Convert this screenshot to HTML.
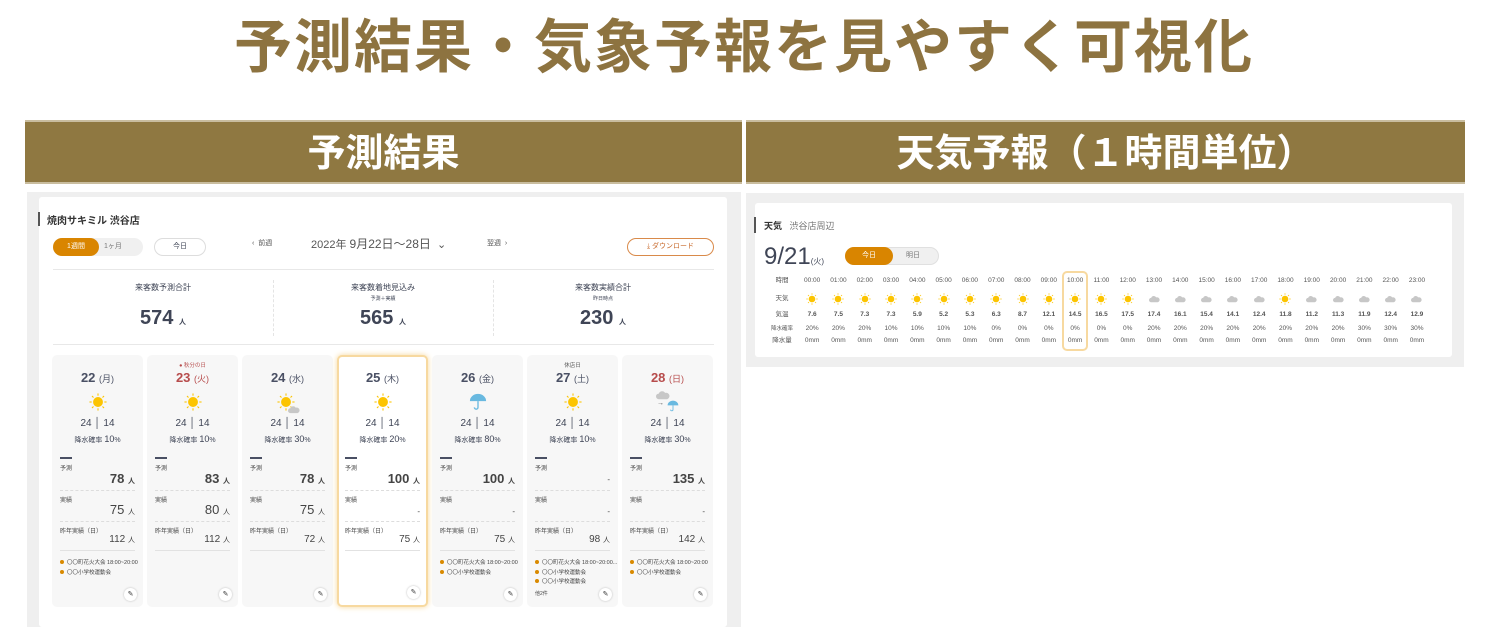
<!DOCTYPE html>
<html><head><meta charset="utf-8"><style>
*{margin:0;padding:0;box-sizing:border-box}
body{width:1488px;height:627px;background:#fff;position:relative;overflow:hidden;font-family:"Liberation Sans","Noto Sans CJK JP",sans-serif;color:#3f4556}
.a{position:absolute}
.title{left:0;top:10px;width:1488px;text-align:center;font-size:58px;font-weight:bold;color:#8d7340;letter-spacing:2px;line-height:76px}
.hd{top:120px;height:64px;background:#8f7841;color:#fff;font-size:38px;font-weight:bold;text-align:center;line-height:64px;border-top:2px solid #c9bd9f;border-bottom:2px solid #c9bd9f}
.card{top:355px;width:91px;height:252px;background:#f7f7f7;border-radius:5px}
.card.hl{background:#fff;border:2px solid #f7d9a0;box-shadow:0 0 6px #f6d79a}
.c{position:absolute;left:0;width:100%;text-align:center}
.sm{font-size:6px;color:#555}
.dt{font-size:13px;font-weight:bold;top:15px;color:#4a5064}
.dt span{font-size:9px;font-weight:normal}
.red{color:#b74c4c}
.tp{top:63px;font-size:10px}
.rp{top:79px;font-size:7px}
.rp b{font-size:9px;font-weight:normal}
.lb{position:absolute;left:8px;font-size:6px;color:#444}
.v{position:absolute;right:8px;text-align:right;color:#444}
.v small{font-size:7px}
.ln{position:absolute;left:8px;right:8px;border-top:1px dashed #ddd}
.ev{position:absolute;left:8px;font-size:5.5px;color:#444;white-space:nowrap}
.ev i{display:inline-block;width:4px;height:4px;border-radius:50%;background:#d98a00;margin-right:3px}
.pen{position:absolute;right:6px;bottom:6px;width:13px;height:13px;border-radius:50%;background:#fff;box-shadow:0 0 2px #bbb;font-size:7px;text-align:center;line-height:13px;color:#333}
.sun{position:absolute;left:50%;top:38px;margin-left:-9px;width:18px;height:18px}
.wt td{font-size:6.5px;text-align:center;width:26.3px;color:#555;padding:0;line-height:8px;vertical-align:middle}
.wt svg{display:block;margin:0 auto}
</style></head><body>
<div class="a title">予測結果・気象予報を見やすく可視化</div>
<div class="a hd" style="left:25px;width:717px">予測結果</div>
<div class="a hd" style="left:746px;width:719px">天気予報（１時間単位）</div>

<div class="a" style="left:27px;top:192px;width:714px;height:435px;background:#efefef"></div>
<div class="a" style="left:39px;top:197px;width:688px;height:430px;background:#fff;border-radius:3px"></div>
<div class="a" style="left:38px;top:212px;width:2px;height:14px;background:#555"></div>
<div class="a" style="left:47px;top:212px;font-size:10px;font-weight:bold;color:#333">焼肉サキミル 渋谷店</div>
<div class="a" style="left:53px;top:238px;width:90px;height:18px;border-radius:9px;background:#f0f0f0"></div>
<div class="a" style="left:53px;top:238px;width:46px;height:18px;border-radius:9px;background:#d98500;color:#fff;font-size:7px;text-align:center;line-height:18px">1週間</div>
<div class="a" style="left:104px;top:238px;font-size:7px;line-height:18px;color:#777">1ヶ月</div>
<div class="a" style="left:154px;top:238px;width:52px;height:18px;border-radius:9px;border:1px solid #ddd;font-size:7px;text-align:center;line-height:16px">今日</div>
<div class="a" style="left:252px;top:238px;font-size:7px;line-height:12px;color:#555">‹&nbsp; 前週</div>
<div class="a" style="left:311px;top:235px;font-size:11px;color:#555">2022年 <span style="font-size:12px">9月22日〜28日</span> &nbsp;⌄</div>
<div class="a" style="left:487px;top:238px;font-size:7px;line-height:12px;color:#555">翌週 &nbsp;›</div>
<div class="a" style="left:627px;top:238px;width:87px;height:18px;border-radius:9px;border:1px solid #d98a4a;font-size:7px;text-align:center;line-height:16px;color:#c7682a">⤓ ダウンロード</div>
<div class="a" style="left:53px;top:269px;width:661px;border-top:1px solid #e8e8e8"></div>
<div class="a" style="left:53px;top:344px;width:661px;border-top:1px solid #e8e8e8"></div>
<div class="a" style="left:273px;top:280px;height:56px;border-left:1px dashed #e4e4e4"></div>
<div class="a" style="left:493px;top:280px;height:56px;border-left:1px dashed #e4e4e4"></div>
<div class="a" style="left:53px;top:282px;width:220px;text-align:center;font-size:8px">来客数予測合計</div>
<div class="a" style="left:273px;top:282px;width:220px;text-align:center;font-size:8px">来客数着地見込み<br><span style="font-size:5px">予測＋実績</span></div>
<div class="a" style="left:493px;top:282px;width:220px;text-align:center;font-size:8px">来客数実績合計<br><span style="font-size:5px">昨日時点</span></div>
<div class="a" style="left:53px;top:307px;width:220px;text-align:center;font-size:20px;font-weight:bold">574 <span style="font-size:7px">人</span></div>
<div class="a" style="left:273px;top:307px;width:220px;text-align:center;font-size:20px;font-weight:bold">565 <span style="font-size:7px">人</span></div>
<div class="a" style="left:493px;top:307px;width:220px;text-align:center;font-size:20px;font-weight:bold">230 <span style="font-size:7px">人</span></div>

<svg width="0" height="0" style="position:absolute"><defs>
<symbol id="sun" viewBox="0 0 20 20"><circle cx="10" cy="10" r="5.5" fill="#fcc400"/><g stroke="#fcc400" stroke-width="1.2"><line x1="10" y1="0.5" x2="10" y2="3"/><line x1="10" y1="17" x2="10" y2="19.5"/><line x1="0.5" y1="10" x2="3" y2="10"/><line x1="17" y1="10" x2="19.5" y2="10"/><line x1="3.3" y1="3.3" x2="5" y2="5"/><line x1="15" y1="15" x2="16.7" y2="16.7"/><line x1="3.3" y1="16.7" x2="5" y2="15"/><line x1="15" y1="5" x2="16.7" y2="3.3"/></g></symbol>
<symbol id="cl" viewBox="0 0 20 14"><path d="M4 13a4 4 0 0 1 0-8 5 5 0 0 1 9-1 4.5 4.5 0 0 1 3 9z" fill="#c7c7c7"/></symbol>
<symbol id="um" viewBox="0 0 20 20"><path d="M1 9a9 8 0 0 1 18 0z" fill="#69b9e0"/><path d="M10 9v7a2 2 0 0 1-4 0" stroke="#69b9e0" stroke-width="1.5" fill="none"/></symbol>
</defs></svg>

<!-- cards -->
<div class="a card" style="left:52px"><div class="c dt">22 <span>(月)</span></div><svg class="sun" viewBox="0 0 20 20"><use href="#sun"/></svg><div class="c tp">24 │ 14</div><div class="c rp">降水確率 <b>10</b>%</div>
<div class="a" style="left:8px;top:102px;width:12px;border-top:2px solid #4a5064"></div><div class="lb" style="top:108px">予測</div><div class="v" style="top:116px;font-size:13px;font-weight:bold">78 <small>人</small></div><div class="ln" style="top:135px"></div>
<div class="lb" style="top:140px">実績</div><div class="v" style="top:147px;font-size:13px">75 <small>人</small></div><div class="ln" style="top:166px"></div>
<div class="lb" style="top:171px">昨年実績（日）</div><div class="v" style="top:179px;font-size:10px">112 <small>人</small></div><div class="ln" style="top:195px;border-top:1px solid #e2e2e2"></div>
<div class="ev" style="top:203px"><i></i>〇〇町花火大会 18:00~20:00</div><div class="ev" style="top:213px"><i></i>〇〇小学校運動会</div><div class="pen">✎</div></div>

<div class="a card" style="left:147px"><div class="c sm" style="top:6px;color:#b74c4c;font-size:5.5px">● 秋分の日</div><div class="c dt red">23 <span>(火)</span></div><svg class="sun" viewBox="0 0 20 20"><use href="#sun"/></svg><div class="c tp">24 │ 14</div><div class="c rp">降水確率 <b>10</b>%</div>
<div class="a" style="left:8px;top:102px;width:12px;border-top:2px solid #4a5064"></div><div class="lb" style="top:108px">予測</div><div class="v" style="top:116px;font-size:13px;font-weight:bold">83 <small>人</small></div><div class="ln" style="top:135px"></div>
<div class="lb" style="top:140px">実績</div><div class="v" style="top:147px;font-size:13px">80 <small>人</small></div><div class="ln" style="top:166px"></div>
<div class="lb" style="top:171px">昨年実績（日）</div><div class="v" style="top:179px;font-size:10px">112 <small>人</small></div><div class="ln" style="top:195px;border-top:1px solid #e2e2e2"></div><div class="pen">✎</div></div>

<div class="a card" style="left:242px"><div class="c dt">24 <span>(水)</span></div><svg class="sun" style="margin-left:-11px" viewBox="0 0 20 20"><use href="#sun"/></svg><svg class="a" style="left:46px;top:50px;width:12px;height:9px" viewBox="0 0 20 14"><use href="#cl"/></svg><div class="c tp">24 │ 14</div><div class="c rp">降水確率 <b>30</b>%</div>
<div class="a" style="left:8px;top:102px;width:12px;border-top:2px solid #4a5064"></div><div class="lb" style="top:108px">予測</div><div class="v" style="top:116px;font-size:13px;font-weight:bold">78 <small>人</small></div><div class="ln" style="top:135px"></div>
<div class="lb" style="top:140px">実績</div><div class="v" style="top:147px;font-size:13px">75 <small>人</small></div><div class="ln" style="top:166px"></div>
<div class="lb" style="top:171px">昨年実績（日）</div><div class="v" style="top:179px;font-size:10px">72 <small>人</small></div><div class="ln" style="top:195px;border-top:1px solid #e2e2e2"></div><div class="pen">✎</div></div>

<div class="a card hl" style="left:337px"><div class="c dt" style="top:13px">25 <span>(木)</span></div><svg class="sun" style="top:36px" viewBox="0 0 20 20"><use href="#sun"/></svg><div class="c tp" style="top:61px">24 │ 14</div><div class="c rp" style="top:77px">降水確率 <b>20</b>%</div>
<div class="a" style="left:6px;top:100px;width:12px;border-top:2px solid #4a5064"></div><div class="lb" style="top:106px;left:6px">予測</div><div class="v" style="top:114px;font-size:13px;font-weight:bold;right:6px">100 <small>人</small></div><div class="ln" style="top:133px;left:6px;right:6px"></div>
<div class="lb" style="top:138px;left:6px">実績</div><div class="v" style="top:150px;font-size:8px;right:6px">-</div><div class="ln" style="top:164px;left:6px;right:6px"></div>
<div class="lb" style="top:169px;left:6px">昨年実績（日）</div><div class="v" style="top:177px;font-size:10px;right:6px">75 <small>人</small></div><div class="ln" style="top:193px;left:6px;right:6px;border-top:1px solid #e2e2e2"></div><div class="pen">✎</div></div>

<div class="a card" style="left:432px"><div class="c dt">26 <span>(金)</span></div><svg class="sun" viewBox="0 0 20 20"><use href="#um"/></svg><div class="c tp">24 │ 14</div><div class="c rp">降水確率 <b>80</b>%</div>
<div class="a" style="left:8px;top:102px;width:12px;border-top:2px solid #4a5064"></div><div class="lb" style="top:108px">予測</div><div class="v" style="top:116px;font-size:13px;font-weight:bold">100 <small>人</small></div><div class="ln" style="top:135px"></div>
<div class="lb" style="top:140px">実績</div><div class="v" style="top:152px;font-size:8px">-</div><div class="ln" style="top:166px"></div>
<div class="lb" style="top:171px">昨年実績（日）</div><div class="v" style="top:179px;font-size:10px">75 <small>人</small></div><div class="ln" style="top:195px;border-top:1px solid #e2e2e2"></div>
<div class="ev" style="top:203px"><i></i>〇〇町花火大会 18:00~20:00</div><div class="ev" style="top:213px"><i></i>〇〇小学校運動会</div><div class="pen">✎</div></div>

<div class="a card" style="left:527px"><div class="c sm" style="top:6px;font-size:5.5px">休店日</div><div class="c dt">27 <span>(土)</span></div><svg class="sun" viewBox="0 0 20 20"><use href="#sun"/></svg><div class="c tp">24 │ 14</div><div class="c rp">降水確率 <b>10</b>%</div>
<div class="a" style="left:8px;top:102px;width:12px;border-top:2px solid #4a5064"></div><div class="lb" style="top:108px">予測</div><div class="v" style="top:120px;font-size:8px">-</div><div class="ln" style="top:135px"></div>
<div class="lb" style="top:140px">実績</div><div class="v" style="top:152px;font-size:8px">-</div><div class="ln" style="top:166px"></div>
<div class="lb" style="top:171px">昨年実績（日）</div><div class="v" style="top:179px;font-size:10px">98 <small>人</small></div><div class="ln" style="top:195px;border-top:1px solid #e2e2e2"></div>
<div class="ev" style="top:203px"><i></i>〇〇町花火大会 18:00~20:00...</div><div class="ev" style="top:213px"><i></i>〇〇小学校運動会</div><div class="ev" style="top:222px"><i></i>〇〇小学校運動会</div><div class="ev" style="top:235px;font-size:5px">他2件</div><div class="pen">✎</div></div>

<div class="a card" style="left:622px"><div class="c dt red">28 <span>(日)</span></div><svg class="a" style="left:34px;top:35px;width:14px;height:10px" viewBox="0 0 20 14"><use href="#cl"/></svg><div class="a" style="left:35px;top:45px;font-size:7px;color:#555">→</div><svg class="a" style="left:45px;top:45px;width:12px;height:12px" viewBox="0 0 20 20"><use href="#um"/></svg><div class="c tp">24 │ 14</div><div class="c rp">降水確率 <b>30</b>%</div>
<div class="a" style="left:8px;top:102px;width:12px;border-top:2px solid #4a5064"></div><div class="lb" style="top:108px">予測</div><div class="v" style="top:116px;font-size:13px;font-weight:bold">135 <small>人</small></div><div class="ln" style="top:135px"></div>
<div class="lb" style="top:140px">実績</div><div class="v" style="top:152px;font-size:8px">-</div><div class="ln" style="top:166px"></div>
<div class="lb" style="top:171px">昨年実績（日）</div><div class="v" style="top:179px;font-size:10px">142 <small>人</small></div><div class="ln" style="top:195px;border-top:1px solid #e2e2e2"></div>
<div class="ev" style="top:203px"><i></i>〇〇町花火大会 18:00~20:00</div><div class="ev" style="top:213px"><i></i>〇〇小学校運動会</div><div class="pen">✎</div></div>

<!-- weather right -->
<div class="a" style="left:746px;top:193px;width:718px;height:174px;background:#efefef"></div>
<div class="a" style="left:755px;top:203px;width:697px;height:154px;background:#fff;border-radius:3px"></div>
<div class="a" style="left:754px;top:217px;width:2px;height:16px;background:#555"></div>
<div class="a" style="left:764px;top:219px;font-size:9px"><b style="color:#333">天気</b> &nbsp;&nbsp;<span style="color:#777">渋谷店周辺</span></div>
<div class="a" style="left:764px;top:243px;font-size:24px;color:#3f4556">9/21<span style="font-size:8px">(火)</span></div>
<div class="a" style="left:845px;top:247px;width:94px;height:18px;border-radius:9px;background:#f0f0f0;border:1px solid #e0e0e0"></div>
<div class="a" style="left:845px;top:247px;width:48px;height:18px;border-radius:9px;background:#d98500;color:#fff;font-size:7px;text-align:center;line-height:18px">今日</div>
<div class="a" style="left:906px;top:247px;font-size:7px;line-height:18px;color:#777">明日</div>
<div class="a" style="left:1062px;top:271px;width:26px;height:80px;border:2px solid #f7d9a0;border-radius:5px"></div>
<table class="a wt" style="left:765px;top:272px;border-collapse:collapse">
<tr style="height:17px"><td style="width:34px">時間</td><td>00:00</td><td>01:00</td><td>02:00</td><td>03:00</td><td>04:00</td><td>05:00</td><td>06:00</td><td>07:00</td><td>08:00</td><td>09:00</td><td>10:00</td><td>11:00</td><td>12:00</td><td>13:00</td><td>14:00</td><td>15:00</td><td>16:00</td><td>17:00</td><td>18:00</td><td>19:00</td><td>20:00</td><td>21:00</td><td>22:00</td><td>23:00</td></tr>
<tr style="height:19px"><td>天気</td>
<td><svg width="12" height="12"><use href="#sun"/></svg></td><td><svg width="12" height="12"><use href="#sun"/></svg></td><td><svg width="12" height="12"><use href="#sun"/></svg></td><td><svg width="12" height="12"><use href="#sun"/></svg></td><td><svg width="12" height="12"><use href="#sun"/></svg></td><td><svg width="12" height="12"><use href="#sun"/></svg></td><td><svg width="12" height="12"><use href="#sun"/></svg></td><td><svg width="12" height="12"><use href="#sun"/></svg></td><td><svg width="12" height="12"><use href="#sun"/></svg></td><td><svg width="12" height="12"><use href="#sun"/></svg></td><td><svg width="12" height="12"><use href="#sun"/></svg></td><td><svg width="12" height="12"><use href="#sun"/></svg></td><td><svg width="12" height="12"><use href="#sun"/></svg></td>
<td><svg width="11" height="8" viewBox="0 0 20 14"><use href="#cl"/></svg></td><td><svg width="11" height="8" viewBox="0 0 20 14"><use href="#cl"/></svg></td><td><svg width="11" height="8" viewBox="0 0 20 14"><use href="#cl"/></svg></td><td><svg width="11" height="8" viewBox="0 0 20 14"><use href="#cl"/></svg></td><td><svg width="11" height="8" viewBox="0 0 20 14"><use href="#cl"/></svg></td><td><svg width="12" height="12"><use href="#sun"/></svg></td><td><svg width="11" height="8" viewBox="0 0 20 14"><use href="#cl"/></svg></td><td><svg width="11" height="8" viewBox="0 0 20 14"><use href="#cl"/></svg></td><td><svg width="11" height="8" viewBox="0 0 20 14"><use href="#cl"/></svg></td><td><svg width="11" height="8" viewBox="0 0 20 14"><use href="#cl"/></svg></td><td><svg width="11" height="8" viewBox="0 0 20 14"><use href="#cl"/></svg></td></tr>
<tr style="height:14px"><td>気温</td><td><b>7.6</b></td><td><b>7.5</b></td><td><b>7.3</b></td><td><b>7.3</b></td><td><b>5.9</b></td><td><b>5.2</b></td><td><b>5.3</b></td><td><b>6.3</b></td><td><b>8.7</b></td><td><b>12.1</b></td><td><b>14.5</b></td><td><b>16.5</b></td><td><b>17.5</b></td><td><b>17.4</b></td><td><b>16.1</b></td><td><b>15.4</b></td><td><b>14.1</b></td><td><b>12.4</b></td><td><b>11.8</b></td><td><b>11.2</b></td><td><b>11.3</b></td><td><b>11.9</b></td><td><b>12.4</b></td><td><b>12.9</b></td></tr>
<tr style="height:13px"><td style="font-size:5.5px">降水確率</td><td>20%</td><td>20%</td><td>20%</td><td>10%</td><td>10%</td><td>10%</td><td>10%</td><td>0%</td><td>0%</td><td>0%</td><td>0%</td><td>0%</td><td>0%</td><td>20%</td><td>20%</td><td>20%</td><td>20%</td><td>20%</td><td>20%</td><td>20%</td><td>20%</td><td>30%</td><td>30%</td><td>30%</td></tr>
<tr style="height:12px"><td>降水量</td><td>0mm</td><td>0mm</td><td>0mm</td><td>0mm</td><td>0mm</td><td>0mm</td><td>0mm</td><td>0mm</td><td>0mm</td><td>0mm</td><td>0mm</td><td>0mm</td><td>0mm</td><td>0mm</td><td>0mm</td><td>0mm</td><td>0mm</td><td>0mm</td><td>0mm</td><td>0mm</td><td>0mm</td><td>0mm</td><td>0mm</td><td>0mm</td></tr>
</table>
</body></html>
